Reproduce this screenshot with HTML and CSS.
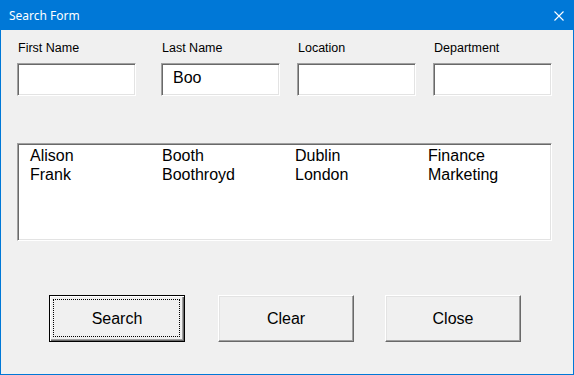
FILE: index.html
```html
<!DOCTYPE html>
<html>
<head>
<meta charset="utf-8">
<link rel="stylesheet" href="styles.css">
</head>
<body>
<div class="window">
  <div class="titlebar">
    <span class="title">Search Form</span>
    <svg class="close" width="10" height="10" viewBox="0 0 10 10"><path d="M0.5 0.5 L9.5 9.5 M9.5 0.5 L0.5 9.5" stroke="#fff" stroke-width="1.1" fill="none"/></svg>
  </div>
  <div class="content">
    <div class="fields">
      <div class="field"><div class="label">First Name</div><div class="input"></div></div>
      <div class="field"><div class="label">Last Name</div><div class="input">Boo</div></div>
      <div class="field"><div class="label">Location</div><div class="input"></div></div>
      <div class="field"><div class="label">Department</div><div class="input"></div></div>
    </div>
    <div class="listbox">
      <div class="row"><span>Alison</span><span>Booth</span><span>Dublin</span><span>Finance</span></div>
      <div class="row"><span>Frank</span><span>Boothroyd</span><span>London</span><span>Marketing</span></div>
    </div>
    <div class="buttons">
      <div class="btn default"><span class="focus"></span>Search</div>
      <div class="btn">Clear</div>
      <div class="btn">Close</div>
    </div>
  </div>
</div>
</body>
</html>
```

FILE: styles.css
```css
html, body {
  margin: 0;
  padding: 0;
  background: #f0f0f0;
}
.window {
  width: 574px;
  height: 375px;
  box-sizing: border-box;
  border: 1px solid #0078d7;
  border-top: 0;
  background: #f0f0f0;
  display: flex;
  flex-direction: column;
}
.titlebar {
  height: 30px;
  flex: none;
  background: #0078d7;
  display: flex;
  align-items: center;
  justify-content: space-between;
  padding: 0 9px 0 8px;
}
.title {
  font-family: "Noto Sans", sans-serif;
  font-size: 12px;
  color: #fff;
  line-height: 16px;
  margin-top: 1px;
}
.close {
  display: block;
  margin-top: 1px;
}
.content {
  padding: 11px 0 0 16px;
  font-family: "Liberation Sans", Arial, sans-serif;
  color: #000;
}
.fields {
  display: grid;
  grid-template-columns: 144px 136px 136px 119px;
}
.label {
  font-size: 12.5px;
  line-height: 15px;
  height: 15px;
  margin-bottom: 7px;
  padding-left: 1px;
}
.input {
  width: 119px;
  height: 33px;
  box-sizing: border-box;
  background: #fff;
  border: 1px solid;
  border-color: #a0a0a0 #fff #fff #a0a0a0;
  box-shadow: inset 1px 1px #696969, inset -1px -1px #e3e3e3;
  font-size: 16px;
  line-height: 28px;
  padding-left: 11px;
}
.listbox {
  margin-top: 47px;
  width: 535px;
  height: 98px;
  box-sizing: border-box;
  background: #fff;
  border: 1px solid;
  border-color: #a0a0a0 #fff #fff #a0a0a0;
  box-shadow: inset 1px 1px #696969, inset -1px -1px #e3e3e3;
  padding: 2px 0 0 12px;
  font-size: 16px;
}
.row {
  display: grid;
  grid-template-columns: 132px 133px 133px auto;
  line-height: 19px;
}
.buttons {
  margin-top: 54px;
  padding-left: 32px;
  display: flex;
  gap: 33px;
}
.btn {
  position: relative;
  width: 136px;
  height: 47px;
  box-sizing: border-box;
  border: 1px solid;
  border-color: #fff #696969 #696969 #fff;
  box-shadow: inset -1px -1px #a0a0a0, inset 1px 1px #e3e3e3;
  display: flex;
  align-items: center;
  justify-content: center;
  font-size: 16px;
  padding-top: 1px;
  background: #f0f0f0;
}
.btn + .btn + .btn {
  margin-left: -2px;
}
.btn.default {
  border: 1px solid #000;
  box-shadow: inset 1px 1px #fff, inset -1px -1px #696969, inset -2px -2px #a0a0a0;
}
.focus {
  position: absolute;
  top: 3px;
  left: 3px;
  right: 4px;
  bottom: 4px;
  border: 1px dotted #000;
}
```
